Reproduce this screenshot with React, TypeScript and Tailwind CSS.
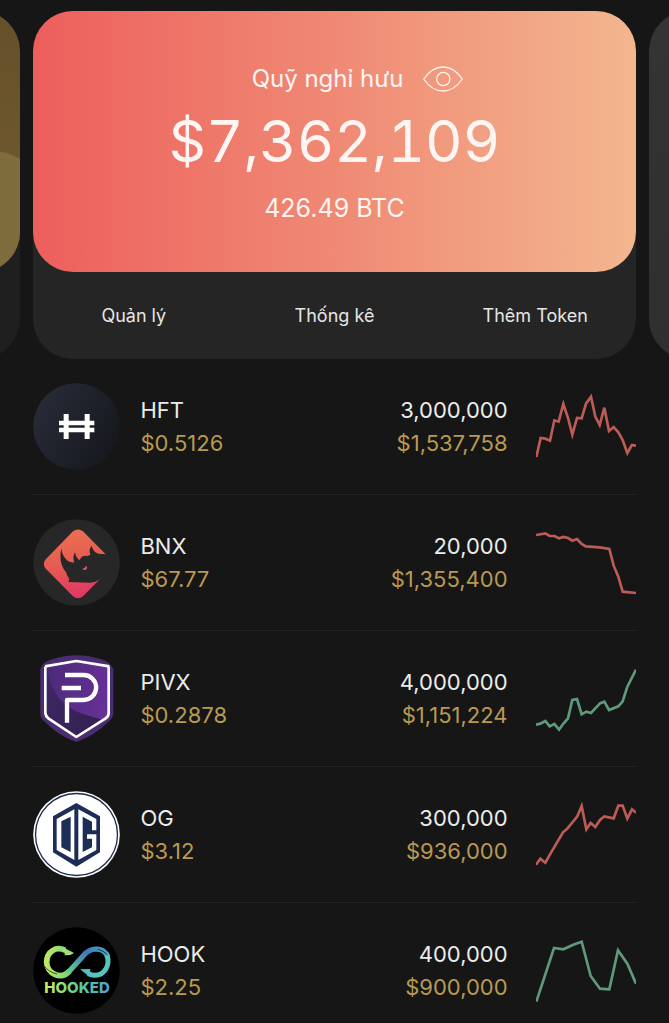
import type { ReactNode } from 'react';

type Token = {
  symbol: string;
  price: string;
  amount: string;
  value: string;
  icon: ReactNode;
  points: string;
  chartBox: string;
  up: boolean;
};

const iconClass = 'size-[87px] shrink-0';

function HftIcon() {
  return (
    <svg viewBox="40 37 261 261" className={iconClass} aria-hidden="true">
      <defs>
        <linearGradient id="hft" x1="0" y1="0.2" x2="1" y2="0.8">
          <stop offset="0" stopColor="#282c38" />
          <stop offset="1" stopColor="#15171c" />
        </linearGradient>
      </defs>
      <circle cx="170.500" cy="167.500" r="130" fill="url(#hft)" />
      <path
        fill="#fff"
        d="M132 130h15v20h48v-20h15v20h14v14h-14v7h14v14h-14v20h-15v-20h-48v20h-15v-20h-14v-14h14v-7h-14v-14h14ZM147 164v7h48v-7Z"
        fillRule="evenodd"
      />
    </svg>
  );
}

function BnxIcon() {
  return (
    <svg viewBox="40 25 261 261" className={iconClass} aria-hidden="true">
      <defs>
        <linearGradient id="bnx" x1="0.4" y1="0" x2="0.6" y2="1">
          <stop offset="0" stopColor="#ea7150" />
          <stop offset="0.5" stopColor="#e65a52" />
          <stop offset="1" stopColor="#df3568" />
        </linearGradient>
      </defs>
      <circle cx="170.500" cy="155.500" r="130" fill="#272727" />
      <path
        fill="url(#bnx)"
        d="M160 62Q175 51 190 62L258 131L236 129Q219 122 216 105Q206 117 212 132L204 136Q186 133 180 149Q168 141 166 125Q158 140 164 155Q150 157 142 149Q127 135 125 113Q117 150 132 175Q142 187 142 194L149 205L146 214L212 216Q228 214 239 207L190 257Q175 269 160 257L77 173Q68 160 77 147Z"
      />
      <path fill="#d95a78" d="M188 175Q195 174 199 166Q205 170 200 176Q194 181 188 175Z" />
    </svg>
  );
}

function PivxIcon() {
  return (
    <svg viewBox="40 28 261 261" className={iconClass} aria-hidden="true">
      <defs>
        <linearGradient id="pivx" x1="0" y1="0" x2="1" y2="0.3">
          <stop offset="0" stopColor="#4a2a78" />
          <stop offset="1" stopColor="#663096" />
        </linearGradient>
        <linearGradient id="pivxShade" x1="0" y1="0" x2="1" y2="0.6">
          <stop offset="0" stopColor="#3f2865" />
          <stop offset="1" stopColor="#352052" />
        </linearGradient>
      </defs>
      <path fill="#4a2d70" d="M62 70Q72 46 98 41Q170 17 244 41Q270 47 281 70V204Q279 218 266 228Q225 270 170 289Q116 270 75 228Q62 217 62 204Z" />
      <path fill="url(#pivx)" d="M78 63L170 46L267 63V203Q266 212 258 218L170 274L86 218Q78 212 78 203Z" />
      <path fill="url(#pivxShade)" d="M78 63L84 80Q105 180 190 205Q222 215 250 222L170 274L86 218Q78 212 78 203Z" />
      <path fill="none" stroke="#fff" strokeWidth="8" strokeLinejoin="round" d="M76 62L170 46L269 62M77 63V202Q78 212 86 218L170 274L258 218Q267 212 267 202V63" />
      <path fill="none" stroke="#fff" strokeWidth="13" strokeLinejoin="round" d="M136 88H192A37 37 0 0 1 192 163H142V231M126 127H184" />
    </svg>
  );
}

function OgIcon() {
  return (
    <svg viewBox="40 31 261 261" className={iconClass} aria-hidden="true">
      <circle cx="170.500" cy="161.500" r="130" fill="#fff" />
      <circle cx="170.500" cy="161.500" r="123" fill="none" stroke="#1d2c4c" strokeWidth="4" />
      <path fill="#1c2d56" d="M170 67L241 107V215L170 258L100 215V107Z" />
      <path fill="#fff" fillRule="evenodd" d="M164 86V238L111 208V115ZM153 108L125 122V200L153 214Z" />
      <path fill="#fff" d="M176 86L230 115V149H217V123L189 108V214L217 200V174H202V161H230V208L176 238Z" />
    </svg>
  );
}

function HookIcon() {
  return (
    <svg viewBox="40 25 261 261" className={iconClass} role="img" aria-label="Hooked">
      <defs>
        <linearGradient id="hook" gradientUnits="userSpaceOnUse" x1="72" y1="0" x2="272" y2="0">
          <stop offset="0" stopColor="#c4ea62" />
          <stop offset="0.4" stopColor="#74d47c" />
          <stop offset="0.65" stopColor="#48a9c9" />
          <stop offset="1" stopColor="#58c3bd" />
        </linearGradient>
        <linearGradient id="hookText" gradientUnits="userSpaceOnUse" x1="72" y1="0" x2="272" y2="0">
          <stop offset="0" stopColor="#d4ee5c" />
          <stop offset="0.5" stopColor="#62cf90" />
          <stop offset="1" stopColor="#4c9fdc" />
        </linearGradient>
        <linearGradient id="hookBand" gradientUnits="userSpaceOnUse" x1="140" y1="165" x2="265" y2="100">
          <stop offset="0" stopColor="#6fd389" />
          <stop offset="0.6" stopColor="#3978bd" />
          <stop offset="1" stopColor="#4cabc5" />
        </linearGradient>
      </defs>
      <circle cx="170.500" cy="155.500" r="130" fill="#000" />
      <path fill="none" stroke="url(#hook)" strokeWidth="17" d="M136 95C110 82 81 98 81 131C81 164 123 186 150 157" />
      <path fill="none" stroke="url(#hookBand)" strokeWidth="16" d="M144 163L191 111C214 82 256 86 264 116" />
      <path fill="none" stroke="#55c3c0" strokeWidth="15" d="M262 110C272 138 256 169 226 170C216 170 209 167 206 164" />
      <path fill="#a2e071" d="M130 86L163 103L152 109L134 110Q138 106 130 98Z" />
      <path fill="#55bfc5" d="M181 152L213 151Q208 156 213 162L207 172Z" />
      <path fill="none" stroke="#000" strokeWidth="2" d="M73 142Q88 161 112 166M234 91Q252 96 263 108" />
      <text x="172" y="222" textAnchor="middle" fontFamily="Inter, sans-serif" fontWeight="800" fontSize="45" fill="url(#hookText)">
        HOOKED
      </text>
    </svg>
  );
}

function EyeIcon() {
  return (
    <svg viewBox="0 0 40 26" className="h-[26px] w-10" fill="none" stroke="currentColor" strokeWidth="1.300" aria-hidden="true">
      <path strokeLinejoin="round" d="M0.700 13C5.500 6 12 1 20 1S34.500 6 39.300 13C34.500 20 28 25 20 25S5.500 20 0.700 13Z" />
      <circle cx="20.300" cy="13" r="6.600" />
    </svg>
  );
}

const tokens: Token[] = [
  {
    symbol: 'HFT', price: '$0.5126', amount: '3,000,000', value: '$1,537,758', icon: <HftIcon />, up: false,
    chartBox: '45 33 300 210',
    points: '46,228 59,171 73,173 87,179 100,118 113,122 127,69 141,111 154,161 168,111 182,112 195,68 210,47 223,107 236,132 250,80 264,150 278,138 292,154 305,177 319,216 333,192 345,194',
  },
  {
    symbol: 'BNX', price: '$67.77', amount: '20,000', value: '$1,355,400', icon: <BnxIcon />, up: false,
    chartBox: '45 36 300 210',
    points: '45,57 73,52 86,60 101,60 114,67 127,63 141,66 154,74 168,69 181,83 194,91 236,94 265,99 278,149 292,182 305,227 345,231',
  },
  {
    symbol: 'PIVX', price: '$0.2878', amount: '4,000,000', value: '$1,151,224', icon: <PivxIcon />, up: true,
    chartBox: '45 24 300 210',
    points: '45,206 58,203 73,195 86,211 100,204 114,221 128,202 141,187 154,132 168,129 182,175 196,167 210,171 237,142 250,137 264,162 292,151 305,136 319,92 345,41',
  },
  {
    symbol: 'OG', price: '$3.12', amount: '300,000', value: '$936,000', icon: <OgIcon />, up: false,
    chartBox: '45 27 300 210',
    points: '45,221 58,203 73,215 87,190 126,124 139,113 169,76 182,45 196,115 209,96 223,108 237,87 250,76 278,82 292,44 305,44 319,83 333,55 345,65',
  },
  {
    symbol: 'HOOK', price: '$2.25', amount: '400,000', value: '$900,000', icon: <HookIcon />, up: true,
    chartBox: '465 30 300 210',
    points: '466,227 519,66 547,70 575,57 602,47 629,150 657,188 685,190 711,73 739,113 765,173',
  },
];

function TokenRow({ token }: { token: Token }) {
  return (
    <li className="flex items-center border-b border-[#232323] py-6 last:border-b-0 last:pb-2">
      {token.icon}
      <div className="ml-5 text-[22px] leading-[33px]">
        <p className="text-[#ececec]">{token.symbol}</p>
        <p className="text-[#b99a50]">{token.price}</p>
      </div>
      <div className="mr-7 ml-auto text-right text-[22px] leading-[33px]">
        <p className="text-[#ececec]">{token.amount}</p>
        <p className="text-[#b99a50]">{token.value}</p>
      </div>
      <svg viewBox={token.chartBox} className="h-[70px] w-[100px] shrink-0" aria-hidden="true">
        <polyline points={token.points} fill="none" stroke={token.up ? '#5f9b7b' : '#bd5c56'} strokeWidth="8" />
      </svg>
    </li>
  );
}

export default function App() {
  return (
    <main className="min-h-screen overflow-hidden bg-[#161616] font-['Inter','Liberation_Sans',sans-serif]">
      <section className="flex justify-center gap-[13px] pt-[11px]">
        <div className="flex w-[90%] shrink-0 flex-col rounded-[40px] bg-[#1f1f1f]">
          <div className="flex h-[261px] items-end justify-end overflow-hidden rounded-[40px] bg-linear-to-b from-[#66502a] to-[#735c30]">
            <div className="-mr-10 h-[122px] w-[150px] rounded-t-full bg-[#7e6c3d]" />
          </div>
        </div>

        <div className="w-[90%] shrink-0 rounded-[40px] bg-[#252525]">
          <div className="flex h-[261px] flex-col items-center rounded-[40px] bg-linear-to-r from-[#ed5e5c] via-[#ef8974] to-[#f3b68f] pt-[51px] text-[#fff5f2]">
            <div className="flex items-center gap-5 pl-[46px]">
              <h1 className="text-2xl leading-[34px]">Quỹ nghỉ hưu</h1>
              <button type="button" aria-label="Ẩn số dư">
                <EyeIcon />
              </button>
            </div>
            <p className="mt-[7px] text-[58px] leading-[76px] tabular-nums">$7,362,109</p>
            <p className="mt-3 text-[25px] leading-[34px]">426.49 BTC</p>
          </div>
          <div className="grid h-[87px] grid-cols-3 text-lg text-[#e6e6e6]">
            <button type="button">Quản lý</button>
            <button type="button">Thống kê</button>
            <button type="button">Thêm Token</button>
          </div>
        </div>

        <div className="w-[90%] shrink-0 rounded-[40px] bg-linear-to-b from-[#343434] to-[#2f2f2f]" />
      </section>

      <ul className="px-[5%]">
        {tokens.map((token) => (
          <TokenRow key={token.symbol} token={token} />
        ))}
      </ul>
    </main>
  );
}
